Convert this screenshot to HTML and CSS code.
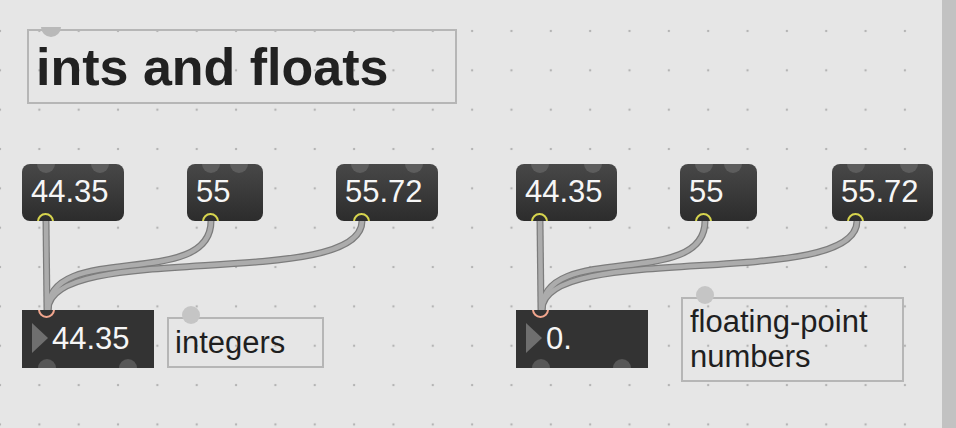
FILE: index.html
```html
<!DOCTYPE html>
<html lang="en">
<head>
  <meta charset="UTF-8" />
  <title>ints and floats</title>
  <link rel="stylesheet" href="styles.css">
</head>
<body>
  <div class="window">
    <div class="canvas">
      <!-- patch cords sit under the boxes -->
      <svg class="cords" width="942" height="428" viewBox="0 0 942 428">
        <g class="cord-edge">
          <path d="M46 221 L47 310" />
          <path d="M211 221 C211 291 48 240 48 310" />
          <path d="M362 221 C362 291 48 240 48 310" />
          <path d="M540 221 L541 310" />
          <path d="M705 221 C705 291 542 240 542 310" />
          <path d="M857 221 C857 291 542 240 542 310" />
        </g>
        <g class="cord-core">
          <path d="M46 221 L47 310" />
          <path d="M211 221 C211 291 48 240 48 310" />
          <path d="M362 221 C362 291 48 240 48 310" />
          <path d="M540 221 L541 310" />
          <path d="M705 221 C705 291 542 240 542 310" />
          <path d="M857 221 C857 291 542 240 542 310" />
        </g>
      </svg>

      <div class="comment title"><span class="port port-clip"></span>ints and floats</div>

      <!-- integer side -->
      <div class="numbox nb-l1"><span class="inlet in-left"></span><span class="inlet in-right"></span>44.35<span class="outlet"></span></div>
      <div class="numbox nb-l2"><span class="inlet in-left"></span><span class="inlet in-right"></span>55<span class="outlet"></span></div>
      <div class="numbox nb-l3"><span class="inlet in-left"></span><span class="inlet in-right"></span>55.72<span class="outlet"></span></div>

      <div class="flonum fl-l"><span class="ring"></span><span class="arrow"></span>44.35<span class="out out-left"></span><span class="out out-right"></span></div>
      <div class="comment note-int"><span class="port"></span>integers</div>

      <!-- float side -->
      <div class="numbox nb-r1"><span class="inlet in-left"></span><span class="inlet in-right"></span>44.35<span class="outlet"></span></div>
      <div class="numbox nb-r2"><span class="inlet in-left"></span><span class="inlet in-right"></span>55<span class="outlet"></span></div>
      <div class="numbox nb-r3"><span class="inlet in-left"></span><span class="inlet in-right"></span>55.72<span class="outlet"></span></div>

      <div class="flonum fl-r"><span class="ring"></span><span class="arrow"></span>0.<span class="out out-left"></span><span class="out out-right"></span></div>
      <div class="comment note-float"><span class="port"></span>floating-point<br>numbers</div>
    </div>
    <div class="scrollbar"></div>
  </div>
</body>
</html>
```

FILE: styles.css
```css
html, body {
  margin: 0;
  padding: 0;
}

body {
  width: 956px;
  height: 428px;
  overflow: hidden;
  font-family: "Liberation Sans", Arial, sans-serif;
  background: #e6e6e6;
}

.window {
  display: flex;
  width: 956px;
  height: 428px;
}

.canvas {
  position: relative;
  flex: 1;
  height: 428px;
  background-color: #e6e6e6;
  background-image: radial-gradient(circle, #b4b4b4 1px, transparent 1.6px);
  background-size: 39.35px 39.35px;
  background-position: -19.675px 11.3px;
}

.scrollbar {
  width: 14px;
  background: #c2c2c2;
}

/* cords */
.cords {
  position: absolute;
  left: 0;
  top: 0;
}

.cords path {
  fill: none;
  stroke-linecap: butt;
}

.cord-edge path {
  stroke: #7c7c7c;
  stroke-width: 7;
}

.cord-core path {
  stroke: #acacac;
  stroke-width: 4.5;
}

/* comments */
.comment {
  position: absolute;
  box-sizing: border-box;
  border: 2px solid #b6b6b6;
  color: #1f1f1f;
  font-size: 31px;
  line-height: 35px;
  padding: 6px 0 0 6px;
}

.port {
  position: absolute;
  left: 13px;
  top: -13px;
  width: 18px;
  height: 18px;
  border-radius: 50%;
  background: #c5c5c5;
}

.title {
  left: 27px;
  top: 29px;
  width: 430px;
  height: 75px;
  font-size: 52px;
  font-weight: bold;
  line-height: normal;
  color: #212121;
  padding: 6px 0 0 7px;
}

.port-clip {
  left: 12px;
  top: -14px;
  width: 20px;
  height: 20px;
  background: #b9b9b9;
  clip-path: inset(10px 0 0 0);
}

.note-int {
  left: 167px;
  top: 317px;
  width: 157px;
  height: 51px;
}

.note-float {
  left: 681px;
  top: 297px;
  width: 223px;
  height: 85px;
  padding: 5px 0 0 7px;
}

/* number boxes */
.numbox,
.flonum {
  position: absolute;
  box-sizing: border-box;
  overflow: hidden;
  color: #f6f6f6;
  font-size: 31px;
  line-height: normal;
}

.numbox {
  top: 164px;
  height: 57px;
  border-radius: 8px;
  padding: 10px 0 0 9px;
  background: linear-gradient(#484848, #2c2c2c);
}

.inlet {
  position: absolute;
  top: -9px;
  width: 18px;
  height: 18px;
  border-radius: 50%;
  background: #5d5d5d;
}

.in-left { left: 15px; }
.in-right { right: 15px; }

.outlet {
  position: absolute;
  left: 15px;
  bottom: -9px;
  width: 13px;
  height: 13px;
  border: 2.5px solid #d6d44e;
  border-radius: 50%;
}

.nb-l1 { left: 22px; width: 102px; }
.nb-l2 { left: 187px; width: 76px; }
.nb-l3 { left: 336px; width: 102px; }
.nb-r1 { left: 516px; width: 101px; }
.nb-r2 { left: 680px; width: 77px; }
.nb-r3 { left: 832px; width: 101px; }

.nb-l3 .outlet { left: 17px; }

/* flonum */
.flonum {
  top: 310px;
  width: 132px;
  height: 58px;
  background: #333333;
  padding: 11px 0 0 30px;
}

.fl-l { left: 22px; }
.fl-r { left: 516px; }

.arrow {
  position: absolute;
  left: 10px;
  top: 13px;
  width: 0;
  height: 0;
  border-top: 15.5px solid transparent;
  border-bottom: 15.5px solid transparent;
  border-left: 16px solid #6f6f6f;
}

.ring {
  position: absolute;
  left: 16px;
  top: -9px;
  width: 13px;
  height: 13px;
  border: 2.5px solid #f2a68e;
  border-radius: 50%;
}

.out {
  position: absolute;
  bottom: -9px;
  width: 18px;
  height: 18px;
  border-radius: 50%;
  background: #575757;
}

.out-left { left: 16px; }
.out-right { right: 17px; }
```
